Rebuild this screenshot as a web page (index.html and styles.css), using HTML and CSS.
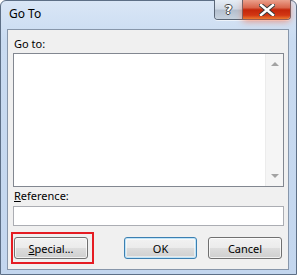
FILE: index.html
```html
<!DOCTYPE html>
<html lang="en">
<head>
    <meta charset="UTF-8">
    <title>Go To</title>
    <link rel="stylesheet" href="styles.css">
</head>
<body>
    <div class="window">
        <div class="titlebar">
            <span class="title">Go To</span>
            <div class="caption-buttons">
                <div class="cap-btn help"><span class="help-glyph">?</span></div>
                <div class="cap-btn close">
                    <svg width="16" height="12" viewBox="0 0 16 12">
                        <path d="M2 1 L14 11 M14 1 L2 11" stroke="#3b3b3b" stroke-width="4.4" stroke-linecap="square"/>
                        <path d="M2 1 L14 11 M14 1 L2 11" stroke="#ffffff" stroke-width="2.4" stroke-linecap="square"/>
                    </svg>
                </div>
            </div>
        </div>
        <div class="client">
            <label class="field-label">Go to:</label>
            <div class="listbox">
                <div class="list-items"></div>
                <div class="scrollbar">
                    <span class="arrow up"></span>
                    <span class="arrow down"></span>
                </div>
            </div>
            <label class="field-label ref-label"><u>R</u>eference:</label>
            <input class="ref-input" type="text">
            <div class="button-row">
                <div class="highlight">
                    <button class="btn"><u>S</u>pecial...</button>
                </div>
                <button class="btn default">OK</button>
                <button class="btn cancel">Cancel</button>
            </div>
        </div>
    </div>
</body>
</html>
```

FILE: styles.css
```css
body {
    margin: 0;
    font-family: "Noto Sans", "Open Sans", Arial, sans-serif;
    font-size: 11px;
    color: #000;
}
.window {
    width: 297px;
    height: 275px;
    box-sizing: border-box;
    border: 1px solid #5d6f86;
    border-radius: 6px 6px 0 0;
    background: linear-gradient(to bottom, #d9e6f6 0, #c9dbf1 40px, #c3d6ee 100%);
    display: flex;
    flex-direction: column;
}
.titlebar {
    height: 28px;
    display: flex;
    align-items: flex-start;
    padding-left: 8px;
    padding-right: 5px;
}
.title {
    margin-top: 5px;
    font-size: 12px;
    line-height: 16px;
}
.caption-buttons {
    margin-left: auto;
    margin-top: -1px;
    display: flex;
    height: 19px;
    border: 1px solid #5a6676;
    border-top: none;
    border-radius: 0 0 4px 4px;
    box-shadow: 0 1px 0 rgba(255, 255, 255, 0.6);
}
.cap-btn {
    display: flex;
    align-items: center;
    justify-content: center;
}
.help {
    width: 27px;
    border-right: 1px solid #5a6676;
    border-radius: 0 0 0 3px;
    background: linear-gradient(to bottom, #e6edf5 0, #d0dae6 45%, #b4c0cf 55%, #c7d2de 100%);
}
.help-glyph {
    font-family: "DejaVu Sans", sans-serif;
    font-weight: bold;
    font-size: 13px;
    line-height: 13px;
    color: #fff;
    text-shadow: 1px 0 0 #444, -1px 0 0 #444, 0 1px 0 #444, 0 -1px 0 #444;
}
.close {
    width: 47px;
    border-radius: 0 0 3px 0;
    background: linear-gradient(to bottom, #eaa08c 0, #d9664c 40%, #c4260a 52%, #d23614 80%, #eb7a30 100%);
    box-shadow: 0 2px 7px rgba(255, 80, 30, 0.6);
}
.client {
    flex: 1;
    margin: 0 7px 4px 6px;
    border: 1px solid #8796aa;
    background: #f0f0f0;
    padding: 6px 4px 0 5px;
    display: flex;
    flex-direction: column;
}
.field-label {
    line-height: 16px;
    padding-left: 1px;
}
.listbox {
    margin-top: 1px;
    height: 134px;
    box-sizing: border-box;
    border: 1px solid #828790;
    background: #fff;
    display: flex;
}
.list-items {
    flex: 1;
}
.scrollbar {
    width: 17px;
    background: #f5f5f5;
    border-left: 1px solid #ececec;
    display: flex;
    flex-direction: column;
    justify-content: space-between;
    align-items: center;
    padding: 8px 0 8px;
}
.arrow {
    width: 0;
    height: 0;
    border-left: 4px solid transparent;
    border-right: 4px solid transparent;
}
.arrow.up {
    border-bottom: 4px solid #a3a3a3;
}
.arrow.down {
    border-top: 4px solid #a3a3a3;
}
.ref-label {
    margin-top: 1px;
}
.ref-input {
    margin: 2px 0 0;
    height: 20px;
    box-sizing: border-box;
    border: 1px solid #abadb3;
    background: #fff;
    padding: 0;
}
.button-row {
    margin-top: 6px;
    display: flex;
    align-items: center;
    padding-right: 2px;
}
.highlight {
    margin-left: -2px;
    border: 2px solid #e51c23;
    padding: 3px 4px 3px 1px;
}
.btn {
    width: 74px;
    height: 22px;
    box-sizing: border-box;
    border: 1px solid #707070;
    border-radius: 3px;
    background: linear-gradient(to bottom, #f2f2f2 0, #ebebeb 50%, #dddddd 50%, #cfcfcf 100%);
    font-family: inherit;
    font-size: 11px;
    padding: 0;
    color: #000;
    box-shadow: inset 0 0 0 1px rgba(255, 255, 255, 0.7);
}
.default {
    margin-left: auto;
    width: 73px;
    border-color: #3c7fb1;
    box-shadow: inset 0 0 0 1px #bfe4f8, inset 0 0 0 2px rgba(255, 255, 255, 0.5);
}
.cancel {
    margin-left: 11px;
}
```
